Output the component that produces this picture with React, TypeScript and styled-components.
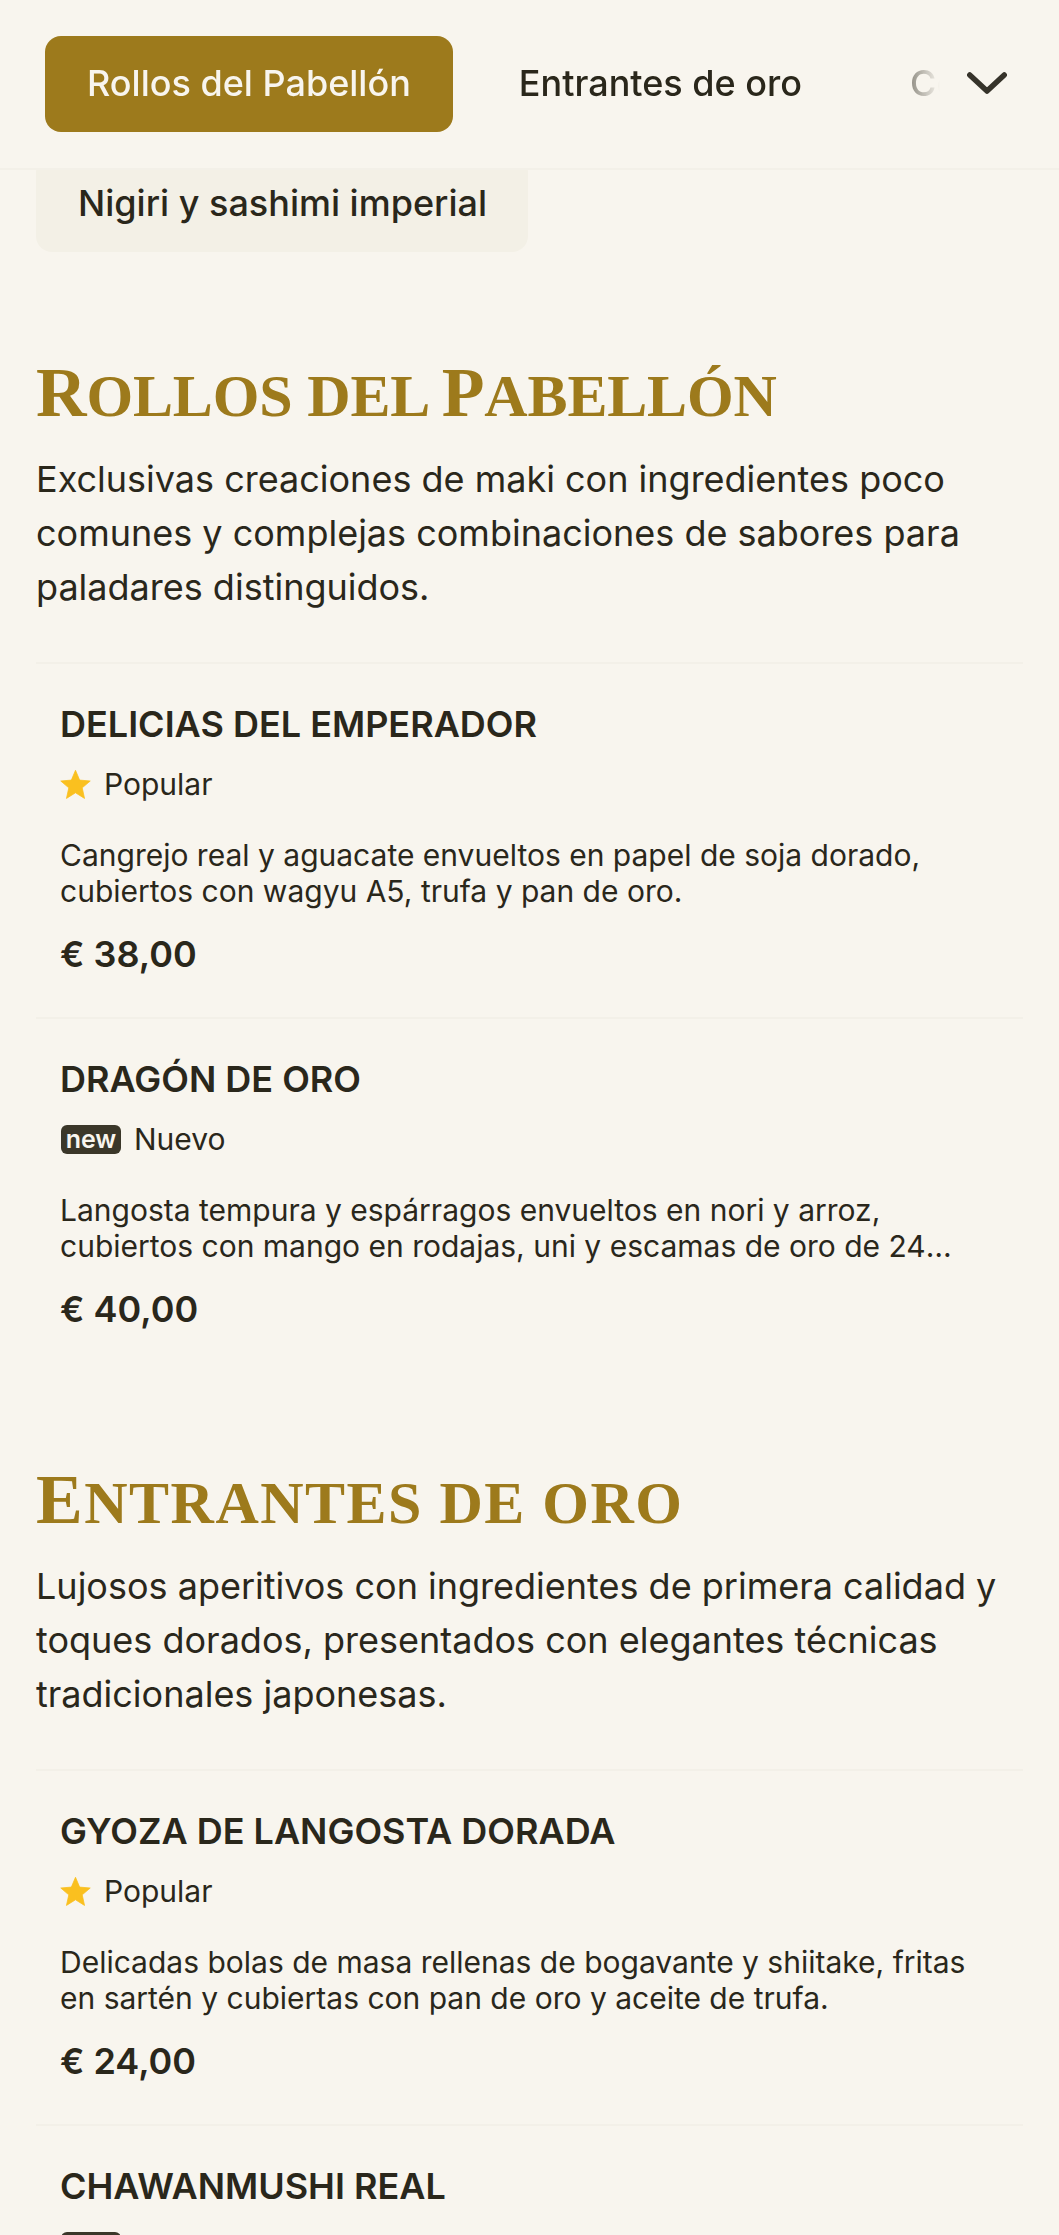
import React from "react";
import styled, { createGlobalStyle } from "styled-components";

type Badge = "popular" | "new";

type Dish = {
  name: string;
  badge: Badge;
  description: string;
  price: string;
};

type Section = {
  title: string;
  tracking: number;
  intro: string;
  dishes: Dish[];
};

const tabs = ["Rollos del Pabellón", "Entrantes de oro", "Colecciones"];

const sections: Section[] = [
  {
    title: "Rollos del Pabellón",
    tracking: -0.15,
    intro:
      "Exclusivas creaciones de maki con ingredientes poco comunes y complejas combinaciones de sabores para paladares distinguidos.",
    dishes: [
      {
        name: "Delicias del emperador",
        badge: "popular",
        description:
          "Cangrejo real y aguacate envueltos en papel de soja dorado, cubiertos con wagyu A5, trufa y pan de oro.",
        price: "€ 38,00",
      },
      {
        name: "Dragón de oro",
        badge: "new",
        description:
          "Langosta tempura y espárragos envueltos en nori y arroz, cubiertos con mango en rodajas, uni y escamas de oro de 24 quilates sobre salsa de yuzu.",
        price: "€ 40,00",
      },
    ],
  },
  {
    title: "Entrantes de oro",
    tracking: 1.5,
    intro:
      "Lujosos aperitivos con ingredientes de primera calidad y toques dorados, presentados con elegantes técnicas tradicionales japonesas.",
    dishes: [
      {
        name: "Gyoza de langosta dorada",
        badge: "popular",
        description:
          "Delicadas bolas de masa rellenas de bogavante y shiitake, fritas en sartén y cubiertas con pan de oro y aceite de trufa.",
        price: "€ 24,00",
      },
      {
        name: "Chawanmushi real",
        badge: "new",
        description:
          "Natilla de huevo al vapor con cangrejo real, erizo de mar y escamas de oro.",
        price: "€ 26,00",
      },
    ],
  },
];

// capitals stand taller than the rest, which is set in small caps
const renderTitle = (title: string) =>
  title
    .split(/(\p{Lu})/u)
    .map((part, i) => (/^\p{Lu}$/u.test(part) ? <Initial key={i}>{part}</Initial> : part));

export default function App() {
  return (
    <Page>
      <GlobalStyle />
      <Header>
        <TabList>
          {tabs.map((tab, i) => (
            <Tab key={tab} $active={i === 0}>
              {tab}
            </Tab>
          ))}
        </TabList>
        <Chevron viewBox="0 0 40 23" fill="none">
          <path
            d="M2.75 3 L20 19 L37.25 3"
            stroke="#36332a"
            strokeWidth="5.5"
            strokeLinecap="round"
            strokeLinejoin="round"
          />
        </Chevron>
      </Header>
      <Main>
        <HiddenTab>Nigiri y sashimi imperial</HiddenTab>
        {sections.map((section) => (
          <MenuSection key={section.title}>
            <SectionTitle $tracking={section.tracking}>{renderTitle(section.title)}</SectionTitle>
            <SectionIntro>{section.intro}</SectionIntro>
            {section.dishes.map((dish) => (
              <DishRow key={dish.name}>
                <DishName>{dish.name}</DishName>
                <BadgeRow>
                  {dish.badge === "popular" ? (
                    <StarIcon viewBox="0 0 24 24">
                      <path
                        d="M12 1 L15.2 8.6 L23.4 9.3 L17.2 14.6 L19 22.8 L12 18.4 L5 22.8 L6.8 14.6 L0.6 9.3 L8.8 8.6 Z"
                        fill="#fac01f"
                        stroke="#fac01f"
                        strokeWidth="0.6"
                        strokeLinejoin="round"
                      />
                    </StarIcon>
                  ) : (
                    <NewTag>new</NewTag>
                  )}
                  <BadgeLabel>
                    {dish.badge === "popular" ? "Popular" : "Nuevo"}
                  </BadgeLabel>
                </BadgeRow>
                <DishDescription>{dish.description}</DishDescription>
                <Price>{dish.price}</Price>
              </DishRow>
            ))}
          </MenuSection>
        ))}
      </Main>
    </Page>
  );
}

const GlobalStyle = createGlobalStyle`
  html, body {
    margin: 0;
    padding: 0;
    background: #f8f5ee;
  }
  * {
    box-sizing: border-box;
  }
`;

const Page = styled.div`
  position: relative;
  width: 1059px;
  height: 2235px;
  overflow: hidden;
  background: #f8f5ee;
  color: #2a271b;
  font-family: Inter, "Liberation Sans", sans-serif;
`;

const Header = styled.header`
  position: absolute;
  top: 0;
  left: 0;
  right: 0;
  z-index: 2;
  height: 170px;
  padding: 36px 50px 0 45px;
  display: flex;
  align-items: flex-start;
  background: #f8f5ee;
  border-bottom: 2px solid #f3f0e8;
`;

const TabList = styled.nav`
  width: 900px;
  display: flex;
  gap: 24px;
  overflow: hidden;
  mask-image: linear-gradient(to right, #000 835px, transparent 895px);
`;

const Tab = styled.div<{ $active?: boolean }>`
  flex: none;
  height: 96px;
  padding: 0 42px 2px;
  display: flex;
  align-items: center;
  border-radius: 16px;
  font-size: 36px;
  font-weight: 500;
  white-space: nowrap;
  background: ${(p) => (p.$active ? "#9d7a1c" : "transparent")};
  color: ${(p) => (p.$active ? "#f8f5ee" : "#2a271b")};
`;

const Chevron = styled.svg`
  flex: none;
  width: 40px;
  height: 23px;
  margin: 36px 0 0 22px;
`;

const Main = styled.main`
  padding: 156px 36px 0;
`;

const HiddenTab = styled.div`
  width: 492px;
  height: 96px;
  padding: 0 42px 2px;
  display: flex;
  align-items: center;
  border-radius: 16px;
  background: #f3f0e6;
  font-size: 36px;
  font-weight: 500;
  white-space: nowrap;
`;

const MenuSection = styled.section`
  padding-top: 102px;
`;

const SectionTitle = styled.h2<{ $tracking: number }>`
  margin: 0;
  font-family: "Liberation Serif", serif;
  font-size: 60px;
  line-height: 84px;
  font-weight: 700;
  letter-spacing: ${(p) => p.$tracking}px;
  text-transform: uppercase;
  color: #9d7a1c;
`;

const Initial = styled.span`
  font-size: 70px;
  line-height: 1;
`;

const SectionIntro = styled.p`
  margin: 14px 0 48px;
  font-size: 36px;
  line-height: 54px;
  font-weight: 400;
`;

const DishRow = styled.article`
  height: 355px;
  padding: 35px 24px 0;
  border-top: 2px solid #f3f0e8;

  &:last-child {
    height: 342px;
  }
`;

const DishName = styled.h3`
  margin: 0;
  font-size: 36px;
  line-height: 50px;
  font-weight: 600;
  text-transform: uppercase;
`;

const BadgeRow = styled.div`
  display: flex;
  align-items: center;
  gap: 13px;
  height: 40px;
  margin-top: 15px;
`;

const StarIcon = styled.svg`
  width: 31px;
  height: 31px;
`;

const NewTag = styled.span`
  width: 60px;
  height: 29px;
  margin-left: 1px;
  display: flex;
  align-items: center;
  justify-content: center;
  border-radius: 6px;
  background: #3b3729;
  color: #f8f5ee;
  font-size: 25px;
  font-weight: 600;
`;

const BadgeLabel = styled.span`
  font-size: 30px;
`;

const DishDescription = styled.p`
  margin: 33px 0 0;
  font-size: 30px;
  line-height: 36px;
  display: -webkit-box;
  -webkit-line-clamp: 2;
  -webkit-box-orient: vertical;
  overflow: hidden;
`;

const Price = styled.div`
  margin-top: 20px;
  font-size: 36px;
  line-height: 50px;
  font-weight: 600;
`;
